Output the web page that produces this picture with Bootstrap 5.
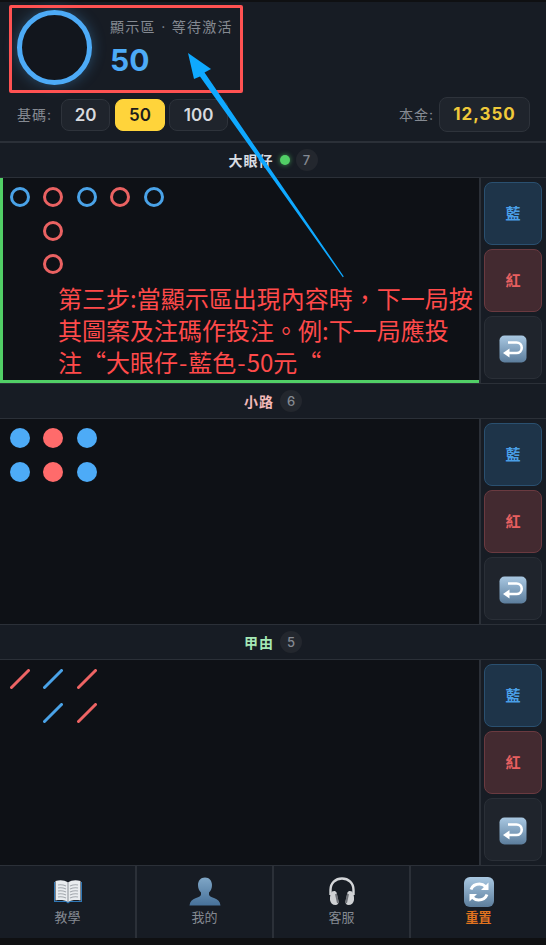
<!DOCTYPE html>
<html lang="zh-Hant">
<head>
<meta charset="utf-8">
<title>路單</title>
<link href="https://cdn.jsdelivr.net/npm/bootstrap@5.3.0/dist/css/bootstrap.min.css" rel="stylesheet">
<style>
:root{--panel:#171c24;--deep:#0e1116;--line:#2b3038;--blue:#4dabf7;--red:#ff6b6b;}
html,body{height:100%;}
body{background:#0f1012;color:#c9ccd1;font-family:Inter,"Noto Sans CJK TC",sans-serif;width:546px;height:945px;overflow:hidden;position:relative;padding-top:2px;}
.top-panel{background:var(--panel);height:141px;border-bottom:2px solid var(--line);padding:8px 16px 0 17px;}
.ring{width:75px;height:75px;border:5px solid var(--blue);border-radius:50%;background:#12161d;box-shadow:0 0 14px rgba(77,171,247,.35);flex:none;}
.disp-wrap{margin-left:18px;}
.disp-label{font-size:14px;letter-spacing:1.3px;color:#858a92;line-height:18px;margin-top:-1px;}
.disp-value{font-size:30px;font-weight:700;line-height:38px;color:var(--blue);margin-top:5px;margin-bottom:-2px;}
.ctrl-row{margin-top:12px;height:35px;}
.mini-label{font-size:14px;letter-spacing:1px;color:#858a92;}
.chip{background:#1f242c;border:1px solid #2e333b;color:#d8dade;font-size:17px;font-weight:600;height:32px;padding:0;border-radius:8px;line-height:30px;}
.chip-a{width:49px;margin-left:9px;}
.chip-b{width:50px;margin-left:5px;}
.chip-c{width:59px;margin-left:4px;}
.chip.is-on,.chip.is-on:hover{background:#ffd43b;border-color:#ffd43b;color:#1c1c1c;}
.bank{background:#1f242c;border:1px solid #2e333b;border-radius:8px;width:91px;height:35px;line-height:33px;text-align:center;color:#f0c93a;font-size:17px;font-weight:700;letter-spacing:1px;margin-left:5px;}
.sec-head{height:35px;gap:6px;background:var(--panel);border-bottom:1px solid var(--line);font-size:14px;font-weight:700;letter-spacing:1px;}
.count{width:22px;height:22px;border-radius:50%;background:#23272e;color:#858a92;font-size:13px;font-weight:500;letter-spacing:0;padding:0;line-height:22px;}
.live-dot{width:10px;height:10px;border-radius:50%;background:#51cf66;box-shadow:0 0 5px rgba(81,207,102,.7);}
.sec-body{height:206px;background:var(--panel);border-bottom:1px solid var(--line);}
.road{background:var(--deep);padding:2.25px 2.25px 2.25px 2.75px;width:479px;flex:none;}
.road.is-live{box-shadow:inset 3px 0 0 #51cf66,inset 0 -3px 0 #51cf66;}
.road-col{width:33.5px;}
.cell{width:33.5px;height:33.5px;display:flex;align-items:center;justify-content:center;}
.bead{width:20px;height:20px;border-radius:50%;}
.o-blue{border:3px solid #4aa3e8;}
.o-red{border:3px solid #ea6262;}
.f-blue{background:var(--blue);}
.f-red{background:var(--red);}
.side{border-left:2px solid var(--line);padding:4px 4px 0 3px;gap:4px;flex:1;}
.side-btn{height:63px;width:58px;padding:2px 0 0;border-radius:8px;font-size:15px;font-weight:600;display:flex;align-items:center;justify-content:center;border-width:1px;border-style:solid;}
.b-blue,.b-blue:hover{background:#1e3449;border-color:#2a5070;color:#4a9fe6;}
.b-red,.b-red:hover{background:#432a30;border-color:#6a3a40;color:#e86060;}
.b-undo,.b-undo:hover{background:#1f242c;border-color:#2a2f37;}
.foot{height:72px;background:var(--panel);}
.foot-item{flex:1;display:flex;flex-direction:column;align-items:center;padding-top:10px;font-size:13px;color:#858a92;border-left:2px solid var(--line);line-height:18px;}
.foot-item:first-child{border-left:0;}
.foot-item svg{width:32px;height:32px;}
.foot-on{color:#e0731f;font-weight:700;}
.mark-box{position:absolute;left:9px;top:5px;width:234px;height:88px;border:3px solid #ff5252;border-radius:2px;pointer-events:none;}
.note-text{position:absolute;left:58px;top:282px;width:430px;font-family:"Noto Sans CJK TC",sans-serif;font-size:24px;line-height:32px;color:#ff4a4a;margin:0;}
.hy{padding:0 1px;}
.arrow-layer{position:absolute;left:0;top:0;width:546px;height:945px;pointer-events:none;}
</style>
</head>
<body>
<svg width="0" height="0" class="position-absolute">
<defs>
<linearGradient id="keyg" x1="0" y1="0" x2="0" y2="1"><stop offset="0" stop-color="#a9c8e2"/><stop offset="1" stop-color="#5c7d9c"/></linearGradient>
<linearGradient id="busthue" x1="0" y1="0" x2="0" y2="1"><stop offset="0" stop-color="#7fa6c6"/><stop offset="1" stop-color="#47719a"/></linearGradient>
<symbol id="undo" viewBox="0 0 28 28"><rect x=".5" y=".5" width="27" height="27" rx="5" fill="url(#keyg)"/><path d="M9 7.500h8.500a5 5 0 0 1 0 10.500H9" fill="none" stroke="#fff" stroke-width="2.600"/><path d="M10.500 13.500v9L4 18z" fill="#fff"/></symbol>
</defs>
</svg>

<section class="top-panel">
  <div class="d-flex align-items-center">
    <div class="ring"></div>
    <div class="disp-wrap">
      <div class="disp-label">顯示區 · 等待激活</div>
      <div class="disp-value">50</div>
    </div>
  </div>
  <div class="ctrl-row d-flex align-items-center">
    <span class="mini-label">基碼:</span>
    <button class="btn chip chip-a" type="button">20</button>
    <button class="btn chip chip-b is-on" type="button">50</button>
    <button class="btn chip chip-c" type="button">100</button>
    <span class="mini-label ms-auto">本金:</span>
    <div class="bank">12,350</div>
  </div>
</section>

<!-- 大眼仔 -->
<div class="sec-head d-flex align-items-center justify-content-center">
  <span style="color:#d9dde3">大眼仔</span><span class="live-dot"></span><span class="badge count">7</span>
</div>
<div class="sec-body d-flex">
  <div class="road is-live d-flex">
    <div class="road-col"><div class="cell"><div class="bead o-blue"></div></div></div>
    <div class="road-col"><div class="cell"><div class="bead o-red"></div></div><div class="cell"><div class="bead o-red"></div></div><div class="cell"><div class="bead o-red"></div></div></div>
    <div class="road-col"><div class="cell"><div class="bead o-blue"></div></div></div>
    <div class="road-col"><div class="cell"><div class="bead o-red"></div></div></div>
    <div class="road-col"><div class="cell"><div class="bead o-blue"></div></div></div>
  </div>
  <div class="side d-flex flex-column">
    <button class="btn side-btn b-blue" type="button">藍</button>
    <button class="btn side-btn b-red" type="button">紅</button>
    <button class="btn side-btn b-undo" type="button" aria-label="返回"><svg width="28" height="28"><use href="#undo"/></svg></button>
  </div>
</div>

<!-- 小路 -->
<div class="sec-head d-flex align-items-center justify-content-center">
  <span style="color:#f2b8b8">小路</span><span class="badge count">6</span>
</div>
<div class="sec-body d-flex">
  <div class="road d-flex">
    <div class="road-col"><div class="cell"><div class="bead f-blue"></div></div><div class="cell"><div class="bead f-blue"></div></div></div>
    <div class="road-col"><div class="cell"><div class="bead f-red"></div></div><div class="cell"><div class="bead f-red"></div></div></div>
    <div class="road-col"><div class="cell"><div class="bead f-blue"></div></div><div class="cell"><div class="bead f-blue"></div></div></div>
  </div>
  <div class="side d-flex flex-column">
    <button class="btn side-btn b-blue" type="button">藍</button>
    <button class="btn side-btn b-red" type="button">紅</button>
    <button class="btn side-btn b-undo" type="button" aria-label="返回"><svg width="28" height="28"><use href="#undo"/></svg></button>
  </div>
</div>

<!-- 甲由 -->
<div class="sec-head d-flex align-items-center justify-content-center">
  <span style="color:#a5e8b5">甲由</span><span class="badge count">5</span>
</div>
<div class="sec-body d-flex">
  <div class="road d-flex">
    <div class="road-col"><div class="cell"><svg width="20" height="20"><line x1="1.500" y1="18.500" x2="18.500" y2="1.500" stroke="#ee6464" stroke-width="3" stroke-linecap="round"/></svg></div></div>
    <div class="road-col"><div class="cell"><svg width="20" height="20"><line x1="1.500" y1="18.500" x2="18.500" y2="1.500" stroke="#4aa3e8" stroke-width="3" stroke-linecap="round"/></svg></div><div class="cell"><svg width="20" height="20"><line x1="1.500" y1="18.500" x2="18.500" y2="1.500" stroke="#4aa3e8" stroke-width="3" stroke-linecap="round"/></svg></div></div>
    <div class="road-col"><div class="cell"><svg width="20" height="20"><line x1="1.500" y1="18.500" x2="18.500" y2="1.500" stroke="#ee6464" stroke-width="3" stroke-linecap="round"/></svg></div><div class="cell"><svg width="20" height="20"><line x1="1.500" y1="18.500" x2="18.500" y2="1.500" stroke="#ee6464" stroke-width="3" stroke-linecap="round"/></svg></div></div>
  </div>
  <div class="side d-flex flex-column">
    <button class="btn side-btn b-blue" type="button">藍</button>
    <button class="btn side-btn b-red" type="button">紅</button>
    <button class="btn side-btn b-undo" type="button" aria-label="返回"><svg width="28" height="28"><use href="#undo"/></svg></button>
  </div>
</div>

<nav class="foot d-flex">
  <div class="foot-item">
    <svg viewBox="0 0 32 32"><path d="M2 6v20h12l2 1.500 2-1.500h12V6h-1v19H3V6z" fill="#2f78b8"/><path d="M3.500 5C8 3.500 12.500 4 16 6.500 19.500 4 24 3.500 28.500 5v19.500C24 23.500 19.500 24 16 26 12.500 24 8 23.500 3.500 24.500z" fill="#e9ecef"/><path d="M16 6.500V26" stroke="#8a8f96" stroke-width="1"/><path d="M6 9c2.500-.5 5-.3 8 1M6 12c2.500-.5 5-.3 8 1M6 15c2.500-.5 5-.3 8 1M6 18c2.500-.5 5-.3 8 1M6 21c2.500-.5 5-.3 8 1M26 9c-2.500-.5-5-.3-8 1M26 12c-2.500-.5-5-.3-8 1M26 15c-2.500-.5-5-.3-8 1M26 18c-2.500-.5-5-.3-8 1M26 21c-2.500-.5-5-.3-8 1" stroke="#a3a8ae" stroke-width="1.100" fill="none"/></svg>
    <span>教學</span>
  </div>
  <div class="foot-item">
    <svg viewBox="0 0 32 32"><path d="M16 1.500c4.500 0 7 3.500 7 7.500 0 3-1 5.500-3 7.500v2c0 1.500 2 2.500 5 3.500 4 1.300 6 3.500 6.500 7.500H.5c.5-4 2.500-6.200 6.500-7.500 3-1 5-2 5-3.500v-2c-2-2-3-4.500-3-7.500 0-4 2.500-7.500 7-7.500z" fill="url(#busthue)"/></svg>
    <span>我的</span>
  </div>
  <div class="foot-item">
    <svg viewBox="0 0 32 32"><path d="M4.500 19V14C4.500 7 9.500 2.500 16 2.500S27.500 7 27.500 14v5" fill="none" stroke="#d4d6d9" stroke-width="2.400"/><path d="M6 15.500c2-1 4-.5 4.500 1l2 9c.3 2-1 3.500-3 3.500-3 0-5-2-5.500-5-.3-3 .5-7 2-8.500z" fill="#cfd1d4"/><path d="M26 15.500c-2-1-4-.5-4.500 1l-2 9c-.3 2 1 3.500 3 3.500 3 0 5-2 5.500-5 .3-3-.5-7-2-8.500z" fill="#cfd1d4"/><path d="M10 18l2 9" stroke="#6e7177" stroke-width="2"/><path d="M22 18l-2 9" stroke="#6e7177" stroke-width="2"/></svg>
    <span>客服</span>
  </div>
  <div class="foot-item foot-on">
    <svg viewBox="0 0 32 32"><rect x="1" y="1" width="30" height="30" rx="6" fill="url(#keyg)"/><path d="M8 13.500C9.500 9.500 13 8 16.500 8c2.500 0 4.500 1 6 2.500" fill="none" stroke="#fff" stroke-width="3"/><path d="M25.500 6.500v7.500H18z" fill="#fff"/><path d="M24 18.500C22.500 22.500 19 24 15.500 24c-2.500 0-4.500-1-6-2.500" fill="none" stroke="#fff" stroke-width="3"/><path d="M6.500 25.500V18H14z" fill="#fff"/></svg>
    <span>重置</span>
  </div>
</nav>

<div class="mark-box"></div>
<p class="note-text">第三步:當顯示區出現內容時&#xFF0C;下一局按<br>其圖案及注碼作投注。例:下一局應投<br>注“大眼仔<span class="hy">-</span>藍色<span class="hy">-</span>50元“</p>
<svg class="arrow-layer" viewBox="0 0 546 945"><polygon points="188,53 211,69 204.500,72.500 343.800,276.500 342.800,277.200 200,76.500 194,79" fill="#0fa9ff"/></svg>
<script src="https://cdn.jsdelivr.net/npm/bootstrap@5.3.0/dist/js/bootstrap.bundle.min.js"></script>
</body>
</html>
